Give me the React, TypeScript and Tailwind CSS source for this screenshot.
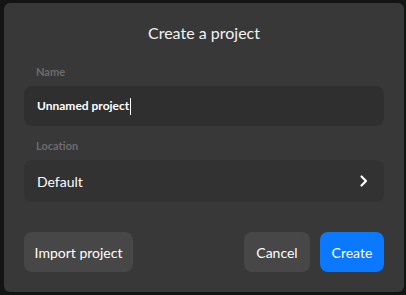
import React from 'react';

const ChevronRight = () => (
    <svg width="12" height="14" viewBox="0 0 12 14" fill="none">
        <path d="M3.5 2.5 L8 7 L3.5 11.5" stroke="white" strokeWidth="2.2" strokeLinecap="round" strokeLinejoin="round" />
    </svg>
);

export default function App() {
    return (
        <div className="w-[406px] h-[295px] bg-[#141414] pt-[3px] pl-[4px] font-['Lato',sans-serif]">
            <div className="w-[400px] h-[289px] rounded-[6px] bg-[#383838] px-5 flex flex-col">
                <h1 className="text-center text-[#f2f2f2] text-[16px] leading-5 pt-[20px] h-[63px]">Create a project</h1>

                <label className="block pl-3 text-[11px] font-bold text-[#6c6c6c] leading-3 mb-[8px]">Name</label>
                <div className="h-10 rounded-[8px] bg-[#2f2f2f] flex items-center px-[13px]">
                    <span className="text-white text-[12px] font-bold">Unnamed project</span>
                    <span className="w-px h-[17px] bg-white ml-[1px]" />
                </div>

                <label className="block pl-3 text-[11px] font-bold text-[#6c6c6c] leading-3 mt-[14px] mb-[8px]">Location</label>
                <div className="h-[42px] rounded-[8px] bg-[#323232] flex items-center justify-between pl-[13px] pr-[14px]">
                    <span className="text-white text-[14px]">Default</span>
                    <ChevronRight />
                </div>

                <div className="flex items-center mt-[30px]">
                    <button className="h-10 w-[109px] rounded-[8px] bg-[#474747] text-white text-[14px]">Import project</button>
                    <div className="flex-1" />
                    <button className="h-10 w-[66px] rounded-[8px] bg-[#474747] text-white text-[14px]">Cancel</button>
                    <button className="h-10 w-[64px] ml-[10px] rounded-[8px] bg-[#0a78ff] text-white text-[14px]">Create</button>
                </div>
            </div>
        </div>
    );
}
